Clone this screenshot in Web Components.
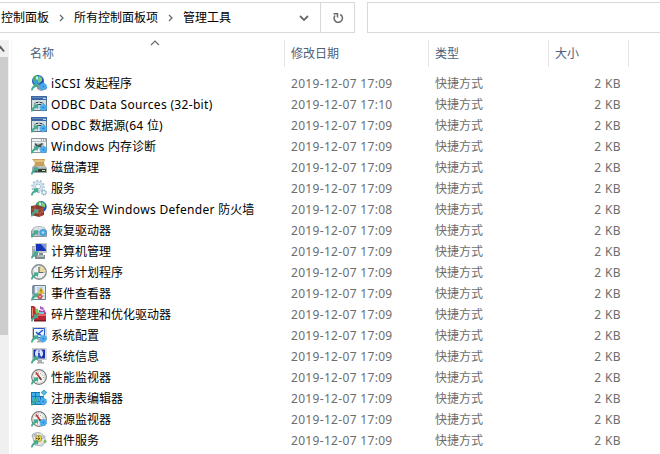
<!DOCTYPE html>
<html lang="zh-CN">
<head>
<meta charset="utf-8">
<title>管理工具</title>
<style>
html,body{margin:0;height:100%;overflow:hidden;background:#fff}
body{font:12px/21px "Noto Sans","Noto Sans CJK SC",sans-serif;color:#000}
</style>
</head>
<body>
<explorer-window></explorer-window>
<script>
const arrow = '<path d="M0 15.5q0-3.500 3.300-5.300L2.300 8.500 7.500 8.300 6.800 13 5.300 11.800Q2 13 1.500 15.500z" fill="#45ab90"/>';
const gear = '<circle cx="12.300" cy="11.500" r="3.200" fill="#4db0f2"/><circle cx="12.300" cy="11.500" r="3.300" fill="none" stroke="#3a9ee6" stroke-width="1" stroke-dasharray="1.500 1"/><circle cx="12.300" cy="11.500" r="1.100" fill="#2f80c6"/>';
const globe = (x,y,r) => `<circle cx="${x}" cy="${y}" r="${r}" fill="#1d55bd"/><circle cx="${x-1}" cy="${y-1}" r="${r-2}" fill="#3f9be0"/><path d="M${x-r+1} ${y-r/2}q2-3 4-3l1 2-2 1-1 3-2 1z" fill="#45b353"/><path d="M${x+1} ${y-r+1}q4 1 3 5l-3 2-1-3z" fill="#7ccf6c"/><path d="M${x-2} ${y-r+1.5}h2v3h-2z" fill="#c8f1f8"/>`;
const odbc = '<path d="M0 0h16v15H0z" fill="#5d7386"/><path d="M0 0h16v4H0z" fill="#3b65a3"/><path d="M1 1h14v1H1z" fill="#6287bb"/><path d="M12 2.500h3" stroke="#c9dbee"/><path d="M1 4h14v10H1z" fill="#d3dde2"/><path d="M3 7.500q4-3 10 0" stroke="#7b8990" fill="none"/><path d="M5 6.500h2m2 0h2M6 8.500h4" stroke="#2e3d46" stroke-width="1.200"/>';
const gauge = '<circle cx="8" cy="8" r="7.300" fill="#f5f5f3" stroke="#77797a" stroke-width="1.200"/><circle cx="8" cy="8" r="6" fill="none" stroke="#d6d6d4" stroke-width="1"/><path d="M4.500 5.500A4.700 4.700 0 0 1 12.500 9" fill="none" stroke="#777" stroke-dasharray="1 1.500"/><path d="M5 3.500l5 7" stroke="#cc3329" stroke-width="1.700"/><path d="M8.500 8.500l2 2.500" stroke="#57494a" stroke-width="1.300"/>';
const screen = fill => `<path d="M1 0h14.500v12H1z" fill="#b7bab6"/><path d="M1.500.5h13.500v11h-13.500z" fill="#e2e1d9"/><path d="M2.500 1.500h11.500v9H2.500z" fill="${fill}"/><path d="M7 12h4v2h2v1.500H6V14h1z" fill="#acaea9"/>`;
const icons = {
iscsi: globe(7,6,6) + '<path d="M6 10l7-1 3 3v2l-6 2-4-2z" fill="#8a9ca5"/>' + arrow + gear,
odbc: odbc + arrow + gear,
memory: '<path d="M.5.5h15v14H.5z" fill="#f1f3f4" stroke="#8d9499"/><path d="M10 2h1m1 0h1m1 0h1" stroke="#526d86"/><path d="M1 3.500h14" stroke="#b6bdc2"/><path d="M3 5h10v6H3z" fill="#c8d0d0"/><path d="M4 5l3 2 4-2 1 1-2 2 1 2-3-1-3 2V8L4 7z" fill="#3e5552"/>' + arrow + gear,
cleanup: '<path d="M1 0h13l-1 4 1 3H3l1-3z" fill="#c9a05a"/><path d="M2 1h11l-1 2H4z" fill="#e2c47f"/><path d="M2 7h12l2 2v5H1V9z" fill="#a1a7a6"/><path d="M3 10h12v3H3z" fill="#353b3e"/><path d="M6 8h8" stroke="#d4d8d8"/><path d="M11 11.500h3" stroke="#bff180"/>' + arrow,
services: '<circle cx="7" cy="6.500" r="4.500" fill="#edf4f8" stroke="#c5dce8" stroke-width="2"/><circle cx="7" cy="6.500" r="6" fill="none" stroke="#9cbaca" stroke-width="1.500" stroke-dasharray="1.700 2"/><circle cx="7" cy="6.500" r="2.500" fill="#fff" stroke="#99bacb"/><circle cx="13" cy="12.500" r="2" fill="#eef7fb" stroke="#9bb8c7"/><circle cx="13" cy="12.500" r="2.700" fill="none" stroke="#8cabbb" stroke-dasharray="1 1.100"/>' + arrow,
firewall: globe(10,5.8,5.7) + '<path d="M0 5l6-1 7 2v8l-5 2-8-2z" fill="#8d3b2b"/><path d="M1 8l7 1 5-2M1 11l7 1 5-2M4 5v3m3 1v3m4-3v3M9 12v3" stroke="#c86c56" stroke-width=".700" fill="none"/>' + arrow,
recovery: '<path d="M3 5q5-1.500 10 0l3 4v5q0 1-1 1H1q-1 0-1-1V9z" fill="#8a979f"/><path d="M3 5.500q5-1.500 10 0l2 4H1z" fill="#d9dfe2"/><path d="M1 10h14v4H1z" fill="#b5c0c5"/><circle cx="12" cy="10.500" r="3.500" fill="#43a2e2"/><circle cx="12" cy="10.500" r="1.300" fill="#b9e1f8"/>' + arrow,
computer: '<path d="M4 0h12v10H4z" fill="#c8cac5"/><path d="M5 1h10v7H5z" fill="#1734b8"/><path d="M10 1h5v6z" fill="#8297df"/><path d="M1 3h3v11H1z" fill="#a6abad"/><path d="M2 5h2" stroke="#e9ecec"/><path d="M8 10h4v2h2v4H4v-4h4z" fill="#7f898e"/><path d="M6 13h7" stroke="#e5e9ea"/>' + arrow,
clock: '<circle cx="8" cy="8" r="7.200" fill="#eff2f2" stroke="#848c91" stroke-width="1.400"/><path d="M8 2v6h6A6 6 0 0 0 8 2" fill="#e9d79c"/><path d="M8 3v5.500h4.500" stroke="#6d6962" stroke-width="1.200" fill="none"/><circle cx="8" cy="8" r="5.700" fill="none" stroke="#b9b8a4" stroke-dasharray="1 3.500"/>' + arrow,
event: '<path d="M2 .5h12.500v14H2z" fill="#dcecf5" stroke="#6c7f97"/><path d="M1 2h3m-3 2h3m-3 2h3m-3 2h3" stroke="#536982"/><path d="M6 3h6M6 5h6M6 8h6M6 11h8" stroke="#a6c0d4"/><path d="M10 2.500l3.500 6h-7z" fill="#f5c62e" stroke="#b79b40" stroke-width=".400"/><path d="M10 4.500v2m0 1v.600" stroke="#443e26"/><circle cx="9" cy="11.500" r="2.500" fill="#d33833"/><path d="M8 10.500l2 2m0-2l-2 2" stroke="#fff" stroke-width=".800"/>' + arrow,
defrag: '<path d="M0 0h3l2 2v11H0z" fill="#b92e39"/><path d="M1 2h1v8H1z" fill="#ee8b75"/><path d="M5 7h10v7H3z" fill="#ba2732"/><path d="M6 8h9v2H6z" fill="#df6764"/><path d="M4 2l3 1 1 4-3 1z" fill="#79cf58"/><path d="M8 4l4 1 1-2 2 4-7 1z" fill="#a144b0"/><path d="M9 0l4 2-1 2-3-1z" fill="#a95fc3"/><path d="M8 6h5v2H8z" fill="#6dc8df"/><path d="M3 14h12v1.500H3z" fill="#7c1822"/>' + arrow,
config: screen('#f0f6fd') + '<path d="M2.500 1.500h11v9h-11z" fill="none" stroke="#285bcd"/><path d="M12 3L7 7l3 1M5 5l2 2" stroke="#194ccc" stroke-width="1.400" fill="none"/>' + arrow + gear,
info: screen('#1930b0') + '<circle cx="8" cy="5.500" r="4" fill="#dce3fb"/><path d="M8 2.500v1m-1 2h1v3m-1 0h3" stroke="#1539b0" stroke-width="1.500" fill="none"/>' + arrow,
perf: gauge + arrow,
registry: '<path d="M0 2h13v13H0z" fill="#1975b3"/><path d="M1 3h3v3H1zm4 0h4v3H5zM1 7h3v4H1zm4 0h4v4H5zm5 0h3v4h-3zM1 12h3v2H1zm4 0h4v2H5z" fill="#3bb1e9"/><path d="M9 1h5v5H9z" fill="#fff"/><path d="M13 0l2.800 2.500L13 5.300l-2.800-2.800z" fill="#53bfed" stroke="#2079b1" stroke-width=".700"/>' + arrow + gear,
resource: gauge + arrow + gear,
component: '<path d="M1 3q6-5 11 0l3 6-4 5-7-1z" fill="#e7e9e9" stroke="#a5adb0"/><circle cx="4" cy="3" r="2" fill="#b5c0c2"/><circle cx="7.700" cy="6.500" r="3.300" fill="#efd643" stroke="#b4a448"/><path d="M7.700 4v5M5 6.500h5.500" stroke="#544a21" stroke-dasharray="1.500 1"/><circle cx="13" cy="5" r="1.700" fill="#adbdec"/><circle cx="14" cy="9.500" r="1.500" fill="#78bb58"/><circle cx="11" cy="12" r="1.500" fill="#d2d8da"/>' + arrow
};
const rows = [
['iscsi','iSCSI 发起程序','17:09'],['odbc','ODBC Data Sources (32-bit)','17:10'],['odbc','ODBC 数据源(64 位)','17:09'],['memory','Windows 内存诊断','17:09'],['cleanup','磁盘清理','17:09'],['services','服务','17:09'],['firewall','高级安全 Windows Defender 防火墙','17:08'],['recovery','恢复驱动器','17:09'],['computer','计算机管理','17:09'],['clock','任务计划程序','17:09'],['event','事件查看器','17:09'],['defrag','碎片整理和优化驱动器','17:09'],['config','系统配置','17:09'],['info','系统信息','17:09'],['perf','性能监视器','17:09'],['registry','注册表编辑器','17:09'],['resource','资源监视器','17:09'],['component','组件服务','17:09']];

function define(name, markup, init){
  customElements.define(name, class extends HTMLElement{
    connectedCallback(){
      if(this.shadowRoot) return;
      this.attachShadow({mode:'open'}).innerHTML = markup;
      if(init) init(this, this.shadowRoot);
    }
  });
}
define('tool-icon','<style>:host{display:block;width:16px;height:16px}svg{display:block}</style><svg width="16" height="16" viewBox="0 0 16 16"></svg>',
 (host,root)=>{root.querySelector('svg').innerHTML=icons[host.getAttribute('name')];});
define('file-row',`<style>
:host{display:grid;grid-template-columns:20px 240px 144px 114px 72px;height:21px;line-height:21px;padding-left:19px;color:#6d6d6d;white-space:nowrap}
tool-icon{margin-top:2px}.name{color:#000}.size{text-align:right}.latin{letter-spacing:.32px}.size.latin{letter-spacing:.4px}
</style><div class="icon"></div><span class="name"></span><span><span class="latin date"></span></span><span>快捷方式</span><span class="size latin">2 KB</span>`,
 (host,root)=>{
  const icon=document.createElement('tool-icon');
  icon.setAttribute('name',host.getAttribute('icon'));
  root.querySelector('.icon').replaceWith(icon);
  root.querySelector('.name').innerHTML=host.getAttribute('name').replace(/[\x20-\x7e]+/g,'<span class="latin">$&</span>');
  root.querySelector('.date').textContent='2019-12-07 '+host.getAttribute('time');
 });
define('address-bar',`<style>
:host{display:flex;gap:12px;height:31px;padding-top:2px}
.path,.search{box-sizing:border-box;border:1px solid #d9d9d9;height:31px;display:flex}
.path{width:355px;border-left:0}.search{width:293px;border-right:0}
.crumbs{width:320px;display:flex;align-items:center;padding-left:1px;box-sizing:border-box;line-height:27px}
.crumbs span{display:block;margin-top:-1px}.sep{margin:1px 10px 0 10px;flex:none}.drop{margin-left:auto;margin-right:11px}
.refresh{width:33px;border-left:1px solid #d9d9d9;display:grid;place-items:center}
svg{display:block;fill:none;stroke:#6b6b6b}
</style><div class="path"><div class="crumbs"><span>控制面板</span><svg class="sep" width="5" height="8"><path d="M1 1l3 3-3 3" stroke-width="1.3"/></svg><span>所有控制面板项</span><svg class="sep" width="5" height="8"><path d="M1 1l3 3-3 3" stroke-width="1.3"/></svg><span>管理工具</span><svg class="drop" width="10" height="8"><path d="M1 2l4 4 4-4" stroke-width="1.8"/></svg></div><div class="refresh"><svg width="12" height="12"><path d="M8.300 2.500A4.200 4.200 0 1 1 3 3.500M1.500 1.700h4v3.800" stroke-width="1.5"/></svg></div></div><div class="search"></div>`);
define('side-scroll',`<style>:host{display:block;width:9px;margin-right:2px;background:#f0f0f0}svg{display:block}.thumb{height:278px;width:8px;background:#cdcdcd}</style><svg width="9" height="17"><path d="M-3 11l3.500-4 3.500 4.500" fill="none" stroke="#606060" stroke-width="2"/></svg><div class="thumb"></div>`);
define('column-head',`<style>
:host{display:flex;height:27px;color:#4c607a;line-height:27px}span{box-sizing:border-box;border-right:1px solid #e5e5e5;padding-left:6px}
.name{width:273px;padding-left:18px;position:relative}.date{width:144px}.type{width:120px}.size{width:80px}
svg{position:absolute;left:138px;top:0}
</style><span class="name">名称<svg width="10" height="6"><path d="M1 5l4-4 4 4" fill="none" stroke="#666" stroke-width="1.1"/></svg></span><span class="date">修改日期</span><span class="type">类型</span><span class="size">大小</span>`);
define('file-list','<style>:host{display:block;flex:1;border-left:1px solid #f3f3f3}.rows{padding-top:6px}</style><column-head></column-head><div class="rows"></div>',
 (host,root)=>{const list=root.querySelector('.rows');for(const [icon,name,time] of rows){const row=document.createElement('file-row');row.setAttribute('icon',icon);row.setAttribute('name',name);row.setAttribute('time',time);list.append(row);}});
define('explorer-window','<style>:host{display:flex;flex-direction:column;height:454px;width:660px;overflow:hidden}.view{display:flex;height:414px;margin-top:7px}</style><address-bar></address-bar><div class="view"><side-scroll></side-scroll><file-list></file-list></div>');
</script>
</body>
</html>
